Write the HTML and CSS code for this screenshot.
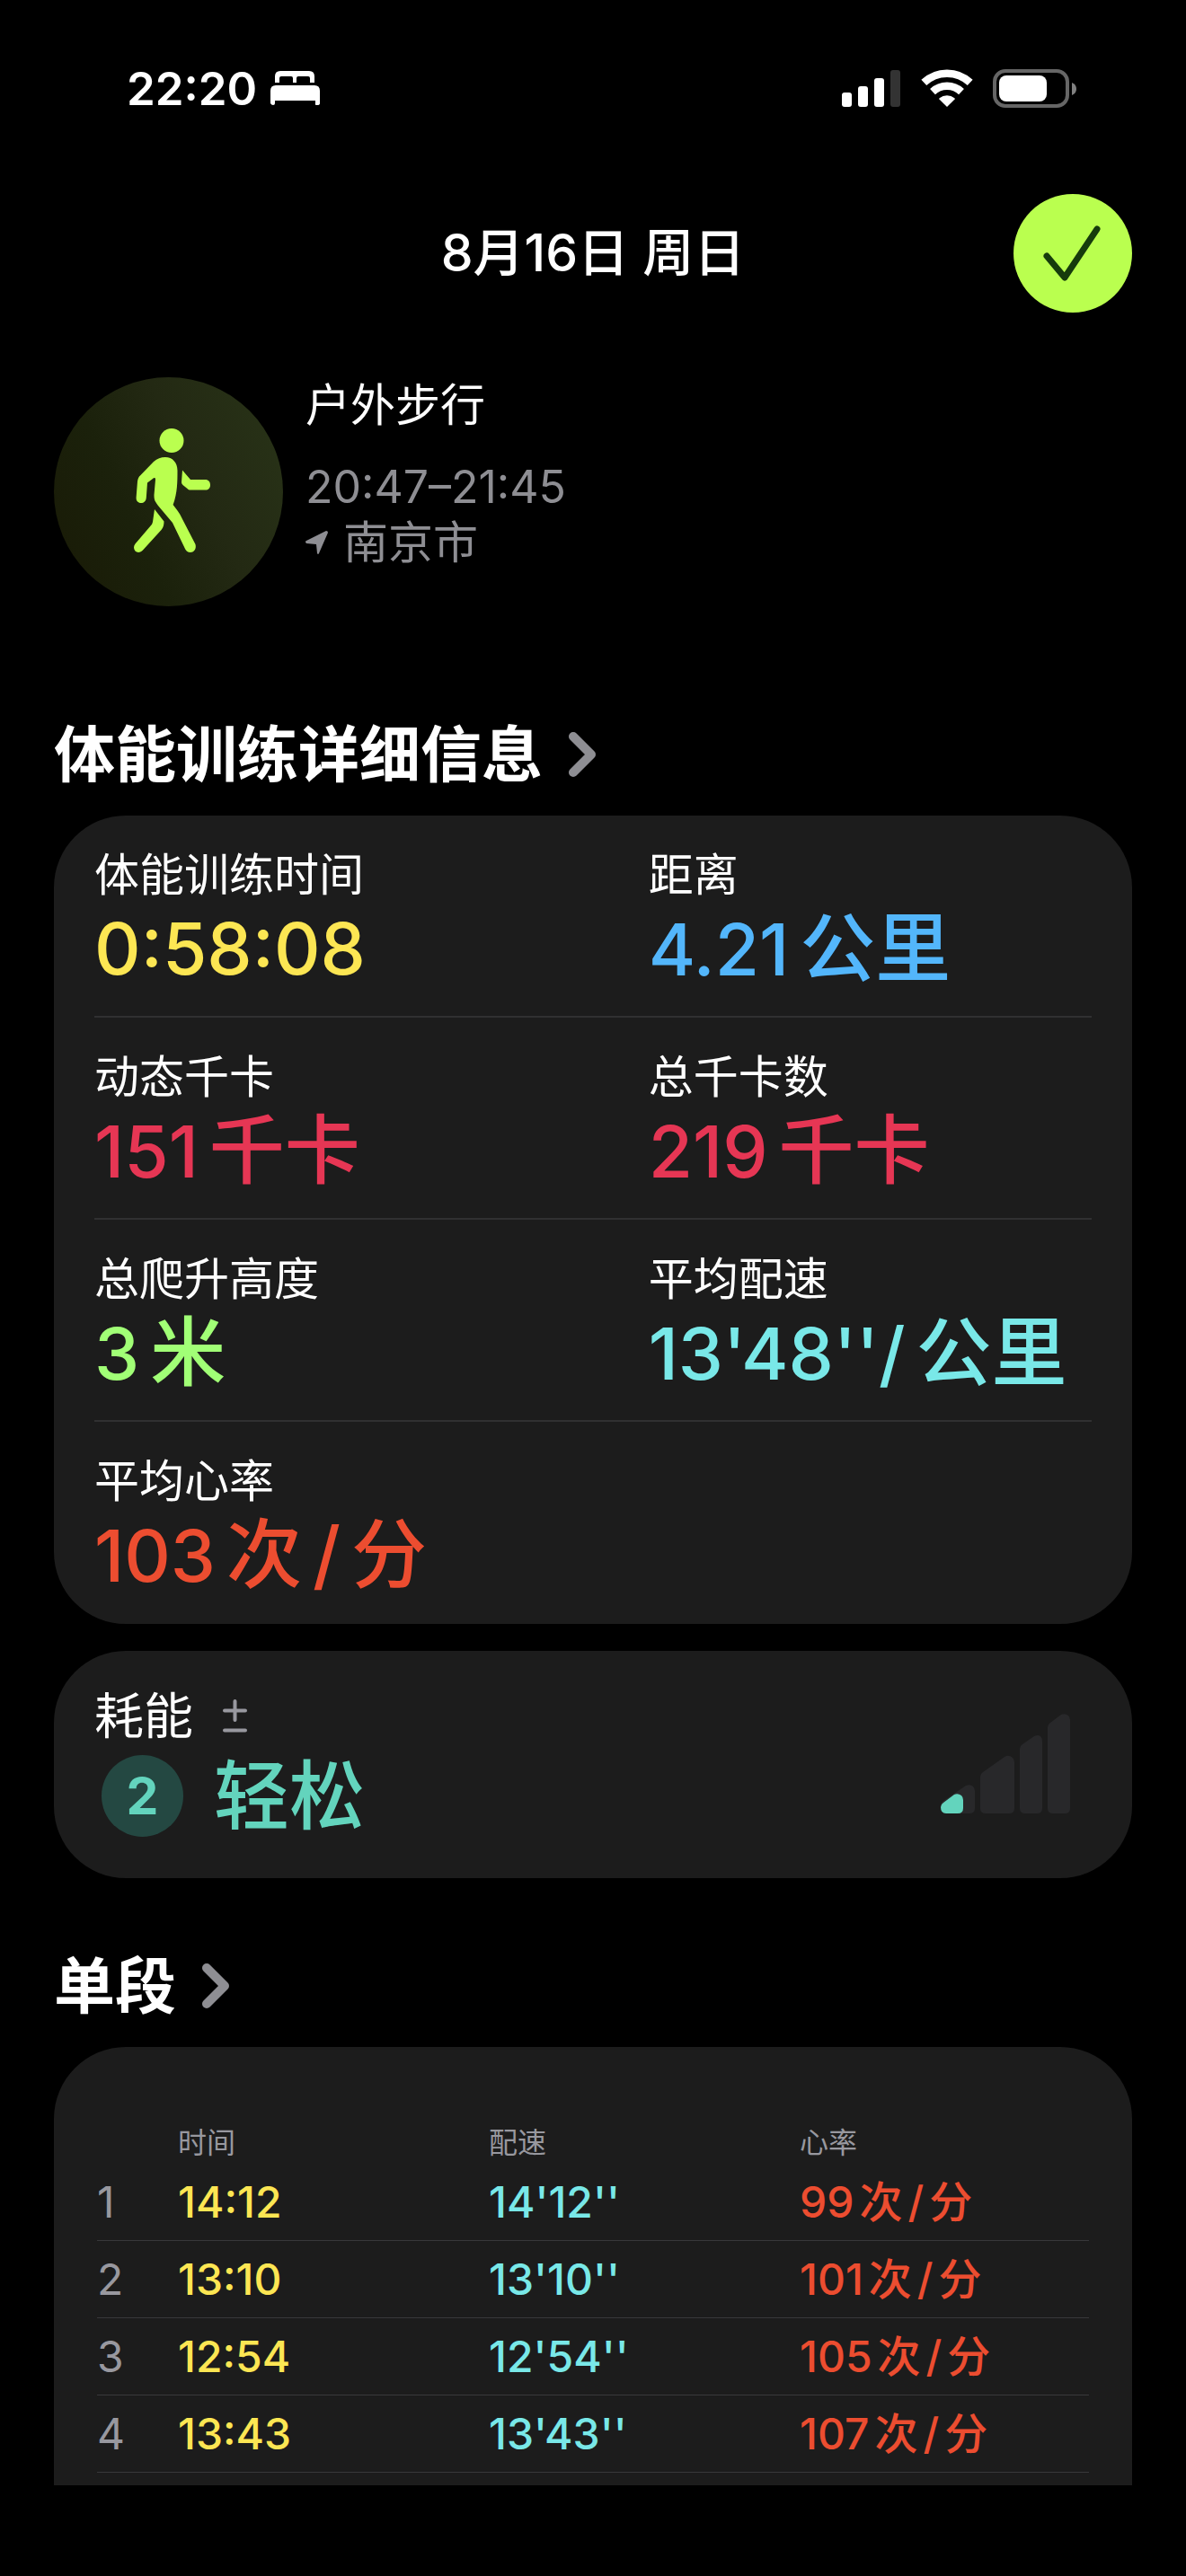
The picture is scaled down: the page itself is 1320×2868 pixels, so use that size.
FILE: index.html
```
<!DOCTYPE html>
<html lang="zh-CN">
<head>
    <meta charset="UTF-8">
    <meta name="viewport" content="width=device-width, initial-scale=1.0">
    <title>户外步行</title>
    <link rel="stylesheet" href="styles.css">
</head>
<body>
    <div class="status-bar">
        <div class="status-left">
            <span>22:20</span>
            <svg class="icon-bed" viewBox="0 0 55 38" width="55" height="38" aria-hidden="true">
                <path d="M5 13V6Q5 0 11 0H43Q49 0 49 6V13H44V8Q44 6 42 6H31Q29 6 29 8V13H25V8Q25 6 23 6H12Q10 6 10 8V13Z"/>
                <path d="M0 36V22Q0 16 6 16H49Q55 16 55 22V36Q55 38 52 38T50 36V33H5V36Q5 38 3 38T0 36Z"/>
            </svg>
        </div>
        <div class="status-right">
            <svg viewBox="0 0 66 43" width="66" height="43" aria-hidden="true">
                <rect x="0" y="26" width="11" height="16" rx="3"/>
                <rect x="18" y="19" width="11" height="23" rx="3"/>
                <rect x="36" y="10" width="11" height="32" rx="3"/>
                <rect class="dim" x="54" y="1" width="11" height="41" rx="3"/>
            </svg>
            <svg viewBox="0 0 58 43" width="58" height="43" aria-hidden="true">
                <path class="wifi-arc" d="M3.3 14.9A37.4 37.4 0 0 1 54.7 14.9"/>
                <path class="wifi-arc" d="M13 25.1A23.3 23.3 0 0 1 45 25.1"/>
                <path d="M29 42L20.4 33.4Q20 32.8 20.6 32.2A13.5 13.5 0 0 1 37.4 32.2Q38 32.8 37.6 33.4Z"/>
            </svg>
            <svg viewBox="0 0 94 43" width="94" height="43" aria-hidden="true">
                <rect class="battery-frame" x="2" y="2" width="81" height="39" rx="12"/>
                <rect x="7" y="7" width="53" height="29" rx="8"/>
                <path class="battery-tip" d="M88 15Q93 17 93 22T88 29Z"/>
            </svg>
        </div>
    </div>

    <header class="top-bar">
        <h1 class="top-title">8月16日 周日</h1>
        <button class="done-button" type="button" aria-label="完成">
            <svg viewBox="0 0 132 132" width="132" height="132" aria-hidden="true">
                <path d="M37 69L57 93L93 39"/>
            </svg>
        </button>
    </header>

    <main class="content">
        <section class="workout">
            <div class="workout-icon">
                <svg viewBox="60 420 255 255" width="255" height="255" aria-hidden="true">
                    <circle cx="191" cy="490.5" r="13.5"/>
                    <path d="M184 509C192 509 197.500 515 197.500 524C197.500 536 197.500 549 192.600 562C198 569 201 573 203 578L217.500 606C219 612 215 615 212 615C209 615 206.500 613 205.500 610L192 582L176 563C172.500 558 171.500 557 171.500 551L173 534C173 531.500 171.500 531.500 170 533L164 537.500L162.800 554C162.500 558 160 560 157 560C153.500 560 151.400 557.500 151.600 554L153 536C153.500 533 154 531 156.500 529L171 514C175 510.500 179 509 184 509Z"/>
                    <path d="M203 523.500L212 534H228.500C232 534 234 536.500 234 540C234 543.500 232 545.500 228.500 545.500H212C210.500 545.500 209.500 545 208.500 544L203.500 540C202.500 539 202 538 202 537Z"/>
                    <path d="M172 567L182.500 580.500C182.500 584 182 587 179.500 590L159 612.500C156.500 615.500 152.500 615.500 150.500 613.500C148.500 611 148.500 608 150.500 605.500L168 585C169 584 169.500 583 170 581Z"/>
                </svg>
            </div>
            <div class="workout-info">
                <p class="workout-name">户外步行</p>
                <p class="workout-meta">20:47–21:45</p>
                <p class="workout-meta">
                    <svg viewBox="0 0 25 27" width="25" height="27" aria-hidden="true">
                        <path d="M23 0Q25 0 25 2L15 25Q14 27 13 25L12 15L1 14Q-1 12 1 11Z"/>
                    </svg>
                    南京市
                </p>
            </div>
        </section>

        <h2 class="section-title">
            <a href="#details">体能训练详细信息
                <svg viewBox="0 0 33 52" width="33" height="52" aria-hidden="true"><path d="M6 6L26 26L6 46"/></svg>
            </a>
        </h2>
        <section class="card details" id="details">
            <div class="detail-row">
                <div>
                    <p class="label">体能训练时间</p>
                    <p class="value yellow">0:58:08</p>
                </div>
                <div>
                    <p class="label">距离</p>
                    <p class="value blue">4.21<span class="unit">公里</span></p>
                </div>
            </div>
            <div class="detail-row">
                <div>
                    <p class="label">动态千卡</p>
                    <p class="value pink">151<span class="unit">千卡</span></p>
                </div>
                <div>
                    <p class="label">总千卡数</p>
                    <p class="value pink">219<span class="unit">千卡</span></p>
                </div>
            </div>
            <div class="detail-row">
                <div>
                    <p class="label">总爬升高度</p>
                    <p class="value green">3<span class="unit">米</span></p>
                </div>
                <div>
                    <p class="label">平均配速</p>
                    <p class="value cyan">13'48''/<span class="unit">公里</span></p>
                </div>
            </div>
            <div class="detail-row">
                <div>
                    <p class="label">平均心率</p>
                    <p class="value orange">103<span class="unit">次</span><span class="unit">/</span><span class="unit">分</span></p>
                </div>
            </div>
        </section>

        <section class="card effort">
            <div>
                <p class="effort-label">耗能
                    <svg viewBox="0 0 27 37" width="27" height="37" aria-hidden="true"><path d="M13.500 2V23M2 12.500H25M2 34.500H25"/></svg>
                </p>
                <p class="effort-value"><span class="badge">2</span>轻松</p>
            </div>
            <svg class="effort-bars" viewBox="0 0 144 111" width="144" height="111" aria-hidden="true">
                <path d="M0 104V102Q0 99 3 97L28 80Q33 78 36 81Q38 83 38 86V105Q38 111 32 111H6Q0 111 0 104Z"/>
                <path d="M44 70Q44 67 47 65L71 48Q76 45 80 49Q82 51 82 54V105Q82 111 76 111H50Q44 111 44 105Z"/>
                <path d="M88 39Q88 36 91 34L104 25Q108 23 111 25Q113 27 113 31V105Q113 111 107 111H94Q88 111 88 105Z"/>
                <path d="M119 15Q119 12 122 10L134 1Q138 -1 142 2Q144 4 144 7V105Q144 111 138 111H125Q119 111 119 105Z"/>
                <path class="active" d="M0 104Q0 101 3 99L15 90Q19 88 23 91Q25 93 25 96V105Q25 111 19 111H6Q0 111 0 104Z"/>
            </svg>
        </section>

        <h2 class="section-title">
            <a href="#splits">单段
                <svg viewBox="0 0 33 52" width="33" height="52" aria-hidden="true"><path d="M6 6L26 26L6 46"/></svg>
            </a>
        </h2>
        <section class="card splits" id="splits">
            <table>
                <thead>
                    <tr><th class="index"></th><th>时间</th><th>配速</th><th>心率</th></tr>
                </thead>
                <tbody>
                    <tr>
                        <td class="index">1</td><td class="yellow">14:12</td><td class="cyan">14'12''</td>
                        <td class="orange">99<span class="unit">次</span><span class="unit">/</span><span class="unit">分</span></td>
                    </tr>
                    <tr>
                        <td class="index">2</td><td class="yellow">13:10</td><td class="cyan">13'10''</td>
                        <td class="orange">101<span class="unit">次</span><span class="unit">/</span><span class="unit">分</span></td>
                    </tr>
                    <tr>
                        <td class="index">3</td><td class="yellow">12:54</td><td class="cyan">12'54''</td>
                        <td class="orange">105<span class="unit">次</span><span class="unit">/</span><span class="unit">分</span></td>
                    </tr>
                    <tr>
                        <td class="index">4</td><td class="yellow">13:43</td><td class="cyan">13'43''</td>
                        <td class="orange">107<span class="unit">次</span><span class="unit">/</span><span class="unit">分</span></td>
                    </tr>
                </tbody>
            </table>
        </section>
    </main>
</body>
</html>
```
FILE: styles.css
```
* {
    box-sizing: border-box;
}

body {
    margin: 0;
    background-color: #000;
    color: #fff;
    font-family: Inter, "Noto Sans CJK SC", sans-serif;
}

h1, h2, p {
    margin: 0;
}

svg {
    display: block;
    flex: none;
    fill: currentColor;
}

/* status bar */
.status-bar {
    display: flex;
    justify-content: space-between;
    align-items: center;
    height: 196px;
    padding: 0 121px 0 141px;
    font-size: 51px;
    font-weight: 600;
}

.status-left {
    display: flex;
    align-items: center;
    gap: 15px;
}

.status-right {
    display: flex;
    align-items: center;
    gap: 22px;
}

.dim {
    fill: #333;
}

.wifi-arc {
    fill: none;
    stroke: #fff;
    stroke-width: 8.5;
}

.battery-frame {
    fill: none;
    stroke: #666;
    stroke-width: 4;
}

.battery-tip {
    fill: #808080;
}

/* title and done button */
.top-bar {
    display: grid;
    grid-template-columns: 1fr auto 1fr;
    align-items: center;
    padding: 20px 60px 72px;
}

.top-title {
    grid-column: 2;
    font-size: 57px;
    font-weight: 500;
    line-height: 60px;
}

.done-button {
    justify-self: end;
    width: 132px;
    height: 132px;
    padding: 0;
    border: none;
    border-radius: 50%;
    background-color: #baff4f;
    cursor: pointer;
}

.done-button path {
    fill: none;
    stroke: #163b0c;
    stroke-width: 7;
    stroke-linecap: round;
    stroke-linejoin: round;
}

.content {
    padding: 0 60px;
}

/* workout summary */
.workout {
    display: flex;
    gap: 25px;
    margin-bottom: 125px;
}

.workout-icon {
    width: 255px;
    height: 255px;
    border-radius: 50%;
    background: linear-gradient(65deg, #191a06, #1b210b 35%, #232913 60%, #293418);
    color: #baff4f;
}

.workout-info {
    font-size: 50px;
    line-height: 62px;
}

.workout-name {
    margin-bottom: 29px;
}

.workout-meta {
    display: flex;
    align-items: center;
    gap: 17px;
    color: #8e8e93;
}

/* section headings */
.section-title {
    margin-bottom: 28px;
    font-size: 68px;
    font-weight: 700;
    line-height: 80px;
}

.section-title a {
    display: flex;
    align-items: center;
    gap: 28px;
    color: inherit;
    text-decoration: none;
}

.section-title path {
    fill: none;
    stroke: #8e8e93;
    stroke-width: 10;
    stroke-linecap: round;
    stroke-linejoin: round;
}

.card {
    border-radius: 80px;
    background-color: #1c1c1c;
}

.yellow {
    color: #fce653;
}

.blue {
    color: #53b6fb;
}

.pink {
    color: #e63654;
}

.green {
    color: #a1ff76;
}

.cyan {
    color: #79e8e8;
}

.orange {
    color: #ec4d30;
}

/* workout details */
.details {
    margin-bottom: 30px;
    padding: 0 45px;
}

.detail-row {
    display: grid;
    grid-template-columns: 5fr 4fr;
    height: 225px;
    padding-top: 36px;
    border-bottom: 2px solid #303031;
}

.detail-row:last-child {
    border-bottom: none;
}

.label {
    font-size: 50px;
    line-height: 60px;
}

.value {
    font-size: 80px;
    font-weight: 500;
    line-height: 104px;
}

.unit {
    margin-left: 6px;
}

.value .unit {
    margin-left: 12px;
    font-size: 84px;
}

/* effort */
.effort {
    display: flex;
    justify-content: space-between;
    align-items: center;
    margin-bottom: 80px;
    padding: 36px 69px 38px 45px;
}

.effort-label {
    display: flex;
    align-items: center;
    gap: 33px;
    font-size: 55px;
    line-height: 72px;
}

.effort-label path {
    stroke: #98989f;
    stroke-width: 4;
    stroke-linecap: round;
}

.effort-value {
    display: flex;
    align-items: center;
    gap: 34px;
    padding-left: 8px;
    color: #63d4bd;
    font-size: 84px;
    font-weight: 500;
    line-height: 107px;
}

.badge {
    width: 91px;
    border-radius: 50%;
    background-color: #244842;
    font-size: 57px;
    font-weight: 700;
    line-height: 91px;
    text-align: center;
}

.effort-bars {
    color: #28282a;
}

.effort-bars .active {
    fill: #63d4bd;
}

/* splits */
.splits {
    padding: 85px 48px 14px;
    border-radius: 80px 80px 0 0;
}

.splits table {
    width: 100%;
    border-collapse: collapse;
    table-layout: fixed;
}

.splits th {
    width: 346px;
    height: 44px;
    padding: 0;
    color: #98989f;
    font-size: 32px;
    font-weight: 400;
    line-height: 44px;
    text-align: left;
}

.splits td {
    height: 86px;
    padding: 2px 0 0;
    border-bottom: 1px solid #38383a;
    font-size: 48px;
    font-weight: 500;
    line-height: 60px;
}

.splits .index {
    width: 90px;
    color: #98989f;
    font-weight: 400;
}

.splits th:last-child {
    width: auto;
}
```
